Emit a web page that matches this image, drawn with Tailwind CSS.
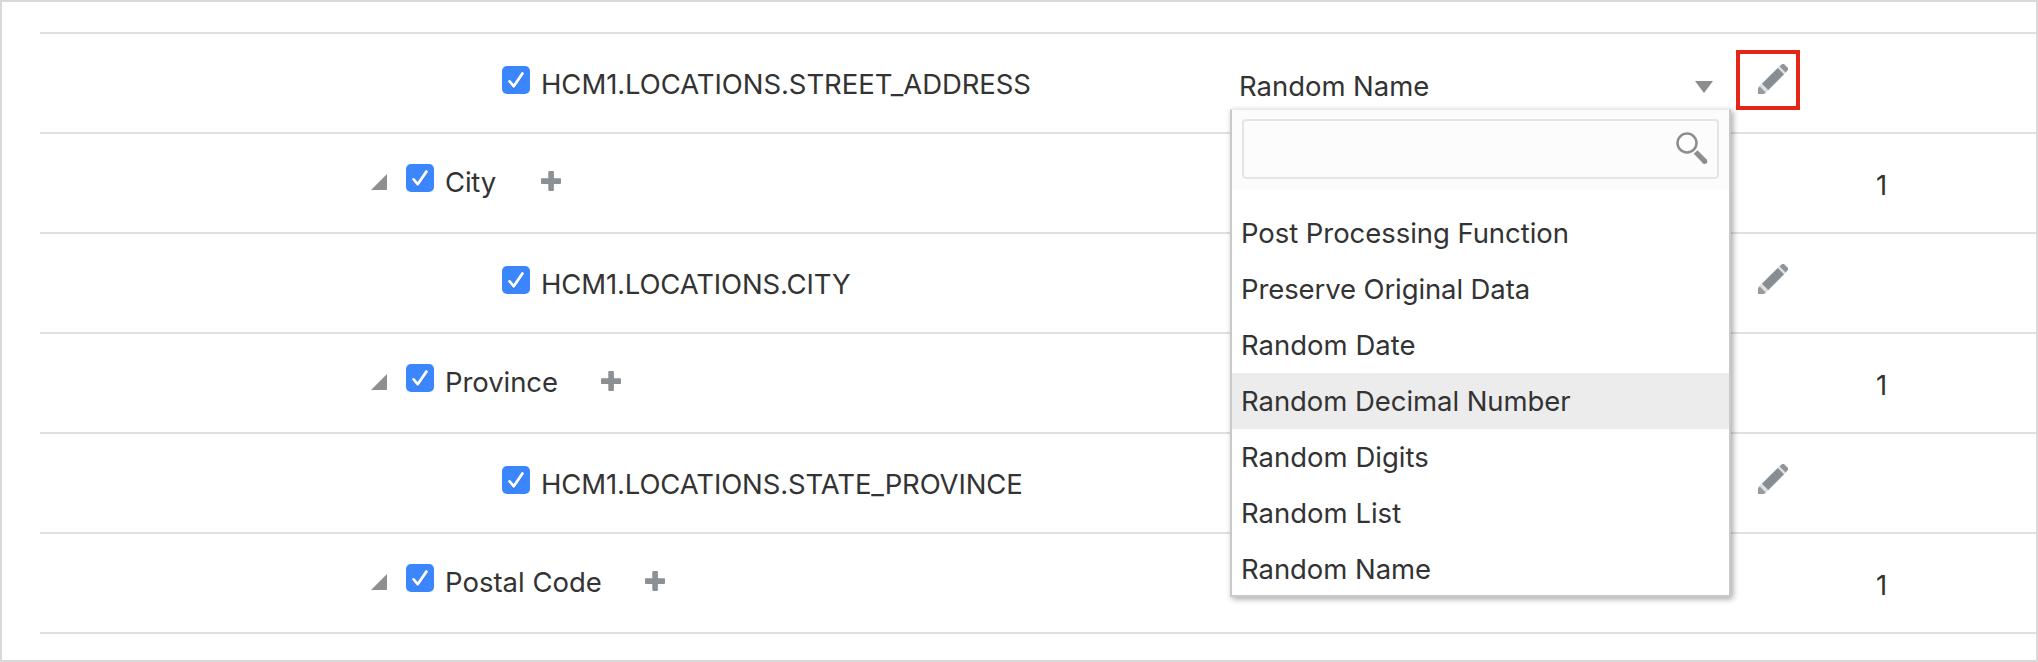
<!DOCTYPE html>
<html lang="en">
<head>
<meta charset="utf-8">
<title>Masking columns</title>
<script src="https://cdn.jsdelivr.net/npm/@tailwindcss/browser@4"></script>
</head>
<body class="bg-white">
<svg class="hidden">
  <symbol id="check" viewBox="0 0 28 28"><rect width="28" height="28" rx="5" fill="#3b86fd"/><path d="M7.6 15.8l4.2 5L20.4 8.4" transform="translate(0 .9)" fill="none" stroke="#2a66cf" stroke-opacity=".5" stroke-width="2.8" stroke-linecap="round" stroke-linejoin="round"/><path d="M7.6 15.4l4.2 4.9L20.4 7.6" fill="none" stroke="#fff" stroke-width="2.8" stroke-linecap="round" stroke-linejoin="round"/></symbol>
  <symbol id="tri" viewBox="0 0 16 16"><path d="M16 0V16H0z" fill="#8d8f91"/></symbol>
  <symbol id="plus" viewBox="0 0 20 20"><path d="M8.2 0H12a.9.9 0 0 1 .9.9V7.300h6.200a.9.9 0 0 1 .9.9V12a.9.9 0 0 1-.9.9H12.900v6.200a.9.9 0 0 1-.9.9H8.200a.9.9 0 0 1-.9-.9V12.900H.9a.9.9 0 0 1-.9-.9V8.200a.9.9 0 0 1 .9-.9H7.300V.9a.9.9 0 0 1 .9-.9z" fill="#8a9094"/></symbol>
  <symbol id="pencil" viewBox="0 0 30 30"><path d="M0 30V23L22 1.500 28.500 8 7 30z" fill="#dfe2e4"/><path d="M19.800 4L26 10.200 10.200 26 4 19.800z" fill="#878d91"/><path d="M21.600 2.400L24 0h2l4 4v2l-2.400 2.400z" fill="#8f9599"/><path d="M1.800 22.400L7.600 28.200 5.800 30H0v-5.800z" fill="#959b9f"/></symbol>
</svg>
<main class="flex h-[662px] w-[2038px] flex-col overflow-hidden border-2 border-[#d9d9d9] pt-[30px] pl-[38px] font-[Inter,sans-serif] text-[27.5px] leading-[40px] text-[#333]">

  <div class="flex h-[100px] shrink-0 items-start border-t-2 border-[#e0e0e0]">
    <div class="flex w-[1190px] items-start pl-[462px]">
      <svg class="mt-8 size-7"><use href="#check"/></svg>
      <span class="mt-[30px] ml-[11px] whitespace-nowrap tracking-[-0.07px]">HCM1.LOCATIONS.STREET_ADDRESS</span>
    </div>
    <div class="relative flex w-[501px] items-start">
      <span class="mt-8 ml-[9px] grow whitespace-nowrap tracking-[-0.04px]">Random Name</span>
      <svg class="mt-[47px] mr-[18px] h-3 w-[18px]" viewBox="0 0 18 12"><path d="M0 0H18L9 12z" fill="#8b8d8f"/></svg>
      <div class="absolute top-[75px] left-0 z-10 h-[488px] w-[501px] border-2 border-t border-[#c9c9c9] border-t-[#ebebeb] bg-white shadow-[2px_2px_6px_rgba(0,0,0,0.35)]">
        <div class="h-[79px] bg-[#fcfcfc] pt-[9px] pl-[10px]">
          <div class="flex h-[60px] w-[477px] justify-end rounded border-2 border-[#e5e5e5] pt-[10px] pr-2">
            <svg class="size-[34px]" viewBox="0 0 34 34"><circle cx="12" cy="12" r="9.500" fill="#fff" stroke="#8b8d8f" stroke-width="2.500"/><path d="M20.600 21L29.800 30.400" stroke="#8b8d8f" stroke-width="5.200"/><circle cx="29.700" cy="30.300" r="2.600" fill="#8b8d8f"/></svg>
          </div>
        </div>
        <ul class="pt-4 leading-[56px] tracking-[-0.06px] whitespace-nowrap">
          <li class="h-14 pl-[9px]">Post Processing Function</li>
          <li class="h-14 pl-[9px] tracking-[-0.11px]">Preserve Original Data</li>
          <li class="h-14 pl-[9px] tracking-normal">Random Date</li>
          <li class="h-14 bg-[#ececec] pl-[9px]">Random Decimal Number</li>
          <li class="h-14 pl-[9px] tracking-normal">Random Digits</li>
          <li class="h-14 pl-[9px] tracking-normal">Random List</li>
          <li class="h-14 pl-[9px]">Random Name</li>
        </ul>
      </div>
    </div>
    <div class="mt-4 ml-[5px] h-[60px] w-16 border-4 border-[#e2261a] pt-[10px] pl-[18px]">
      <svg class="size-[30px]"><use href="#pencil"/></svg>
    </div>
  </div>

  <div class="flex h-[100px] shrink-0 items-start border-t-2 border-[#e0e0e0]">
    <div class="flex w-[1691px] items-start pl-[331px]">
      <svg class="mt-10 size-4"><use href="#tri"/></svg>
      <svg class="mt-[30px] ml-[19px] size-7"><use href="#check"/></svg>
      <span class="mt-7 ml-[11px] whitespace-nowrap tracking-[-0.19px]">City</span>
      <svg class="mt-[37px] ml-[45px] size-5"><use href="#plus"/></svg>
    </div>
    <span class="mt-[31px] ml-[145px]">1</span>
  </div>

  <div class="flex h-[100px] shrink-0 items-start border-t-2 border-[#e0e0e0]">
    <div class="flex w-[1691px] items-start pl-[462px]">
      <svg class="mt-8 size-7"><use href="#check"/></svg>
      <span class="mt-[30px] ml-[11px] whitespace-nowrap tracking-[-0.14px]">HCM1.LOCATIONS.CITY</span>
    </div>
    <svg class="mt-[30px] ml-[27px] size-[30px]"><use href="#pencil"/></svg>
  </div>

  <div class="flex h-[100px] shrink-0 items-start border-t-2 border-[#e0e0e0]">
    <div class="flex w-[1691px] items-start pl-[331px]">
      <svg class="mt-10 size-4"><use href="#tri"/></svg>
      <svg class="mt-[30px] ml-[19px] size-7"><use href="#check"/></svg>
      <span class="mt-7 ml-[11px] whitespace-nowrap tracking-[-0.07px]">Province</span>
      <svg class="mt-[37px] ml-[43.5px] size-5"><use href="#plus"/></svg>
    </div>
    <span class="mt-[31px] ml-[145px]">1</span>
  </div>

  <div class="flex h-[100px] shrink-0 items-start border-t-2 border-[#e0e0e0]">
    <div class="flex w-[1691px] items-start pl-[462px]">
      <svg class="mt-8 size-7"><use href="#check"/></svg>
      <span class="mt-[30px] ml-[11px] whitespace-nowrap tracking-[-0.13px]">HCM1.LOCATIONS.STATE_PROVINCE</span>
    </div>
    <svg class="mt-[30px] ml-[27px] size-[30px]"><use href="#pencil"/></svg>
  </div>

  <div class="flex h-[100px] shrink-0 items-start border-t-2 border-[#e0e0e0]">
    <div class="flex w-[1691px] items-start pl-[331px]">
      <svg class="mt-10 size-4"><use href="#tri"/></svg>
      <svg class="mt-[30px] ml-[19px] size-7"><use href="#check"/></svg>
      <span class="mt-7 ml-[11px] whitespace-nowrap">Postal Code</span>
      <svg class="mt-[37px] ml-[43px] size-5"><use href="#plus"/></svg>
    </div>
    <span class="mt-[31px] ml-[145px]">1</span>
  </div>

  <div class="shrink-0 border-t-2 border-[#e0e0e0]"></div>
</main>
</body>
</html>
